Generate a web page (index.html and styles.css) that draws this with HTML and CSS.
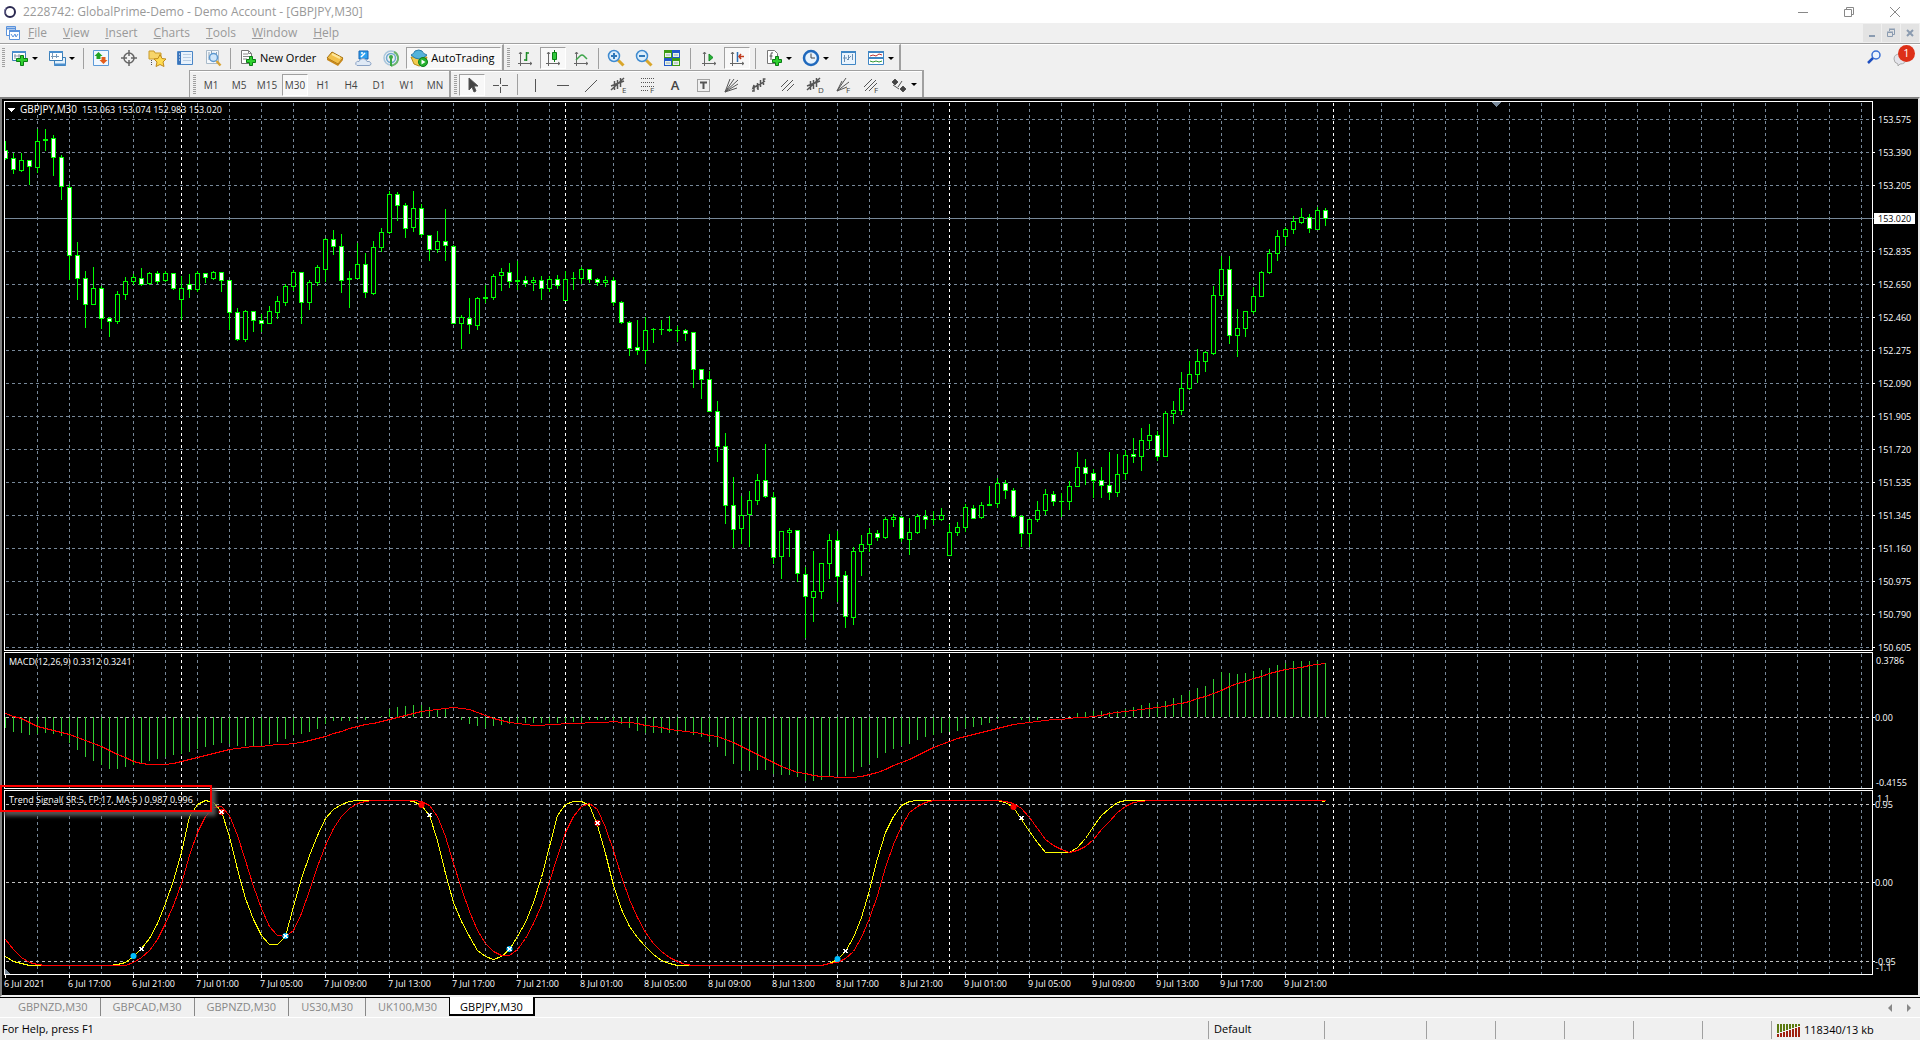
FILE: index.html
```html
<!DOCTYPE html>
<html lang="en">
<head>
<meta charset="utf-8">
<title>2228742: GlobalPrime-Demo - Demo Account - [GBPJPY,M30]</title>
<link rel="stylesheet" href="styles.css">
</head>
<body>
<header class="titlebar">
  <svg class="logo" width="14" height="14" viewBox="0 0 14 14"><ellipse cx="7" cy="7" rx="5" ry="5" fill="none" stroke="#2a2850" stroke-width="2"/><path d="M3 2.500Q1 5 2 9" stroke="#8a88b0" fill="none"/></svg>
  <h1>2228742: GlobalPrime-Demo - Demo Account - [GBPJPY,M30]</h1>
  <div class="winbtns">
    <button aria-label="Minimize"><svg width="12" height="12"><path d="M1 6.500h10" stroke="#888"/></svg></button>
    <button aria-label="Restore"><svg width="12" height="12" fill="none" stroke="#888"><path d="M1.500 3.500h7v7h-7zM3.500 3.500v-2h7v7h-2"/></svg></button>
    <button aria-label="Close"><svg width="12" height="12"><path d="M1 1l10 10M11 1L1 11" stroke="#888"/></svg></button>
  </div>
</header>

<nav class="menubar">
  <svg class="docicon" width="16" height="14" viewBox="0 0 16 14" fill="#fff" stroke="#5b93dc"><path d="M1.500.500h9v9h-9z"/><path d="M1.500 2.500h9" stroke-width="2"/><path d="M4.500 4.500h10v9h-10z"/><path d="M4 5h11" stroke-width="2"/><path d="M6 8l2 3 2-3 1 3 2-3" fill="none"/></svg>
  <button><u>F</u>ile</button><button><u>V</u>iew</button><button><u>I</u>nsert</button><button><u>C</u>harts</button><button><u>T</u>ools</button><button><u>W</u>indow</button><button><u>H</u>elp</button>
  <div class="docbtns">
    <button aria-label="Minimize chart"><svg width="10" height="10"><path d="M2 8h6" stroke="#8a9bb0" stroke-width="2"/></svg></button>
    <button aria-label="Restore chart"><svg width="10" height="10" fill="none" stroke="#8a9bb0"><path d="M1.500 4.500h5v4h-5zM1 4h6M3.500 3V1.500h5v5H7M3 1h6"/></svg></button>
    <button aria-label="Close chart"><svg width="10" height="10"><path d="M2 2l6 6M8 2L2 8" stroke="#8a9bb0" stroke-width="2"/></svg></button>
  </div>
</nav>

<div class="toolbars">
<div class="row">
  <div class="bar">
    <span class="grip"></span>
    <button class="drop" aria-label="New chart"><svg viewBox="0 0 18 18"><path d="M1.500 2.500h13v9h-13z" fill="#fff" stroke="#3c7fb8"/><path d="M1 3h14" stroke="#4a8fce" stroke-width="2"/><path d="M4 5v5M8 5v4M3 7h6" stroke="#89a" fill="none"/><path d="M9.500 6.500h3v3h4v3h-4v4h-3v-4h-4v-3h4z" fill="#2fd02f" stroke="#0a7d14"/></svg><i></i></button>
    <button class="drop" aria-label="Profiles"><svg viewBox="0 0 18 18"><path d="M6.500 8.500h11v8h-11z" fill="#e4f1fc" stroke="#3c7fb8"/><path d="M6 15.500h12" stroke="#4a8fce" stroke-width="2"/><path d="M1.500 2.500h13v9h-13z" fill="#fff" stroke="#3c7fb8"/><path d="M1 3h14" stroke="#4a8fce" stroke-width="2"/><path d="M4.500 4v6M8.500 5v4M3 7.500h8" stroke="#7a99b8" fill="none"/></svg><i></i></button>
    <span class="sep"></span>
    <button aria-label="Market Watch"><svg viewBox="0 0 18 18"><path d="M1.500 1.500h15v15h-15z" fill="#f2f8ff" stroke="#5c9ad8"/><path d="M6.500 3l4 4h-2v3h-4V7h-2z" fill="#22a322"/><path d="M11.500 15l4-4h-2V8h-4v3h-2z" fill="#e35d1c"/></svg></button>
    <button aria-label="Data Window"><svg viewBox="0 0 18 18" fill="none" stroke="#666" stroke-width="1.500"><circle cx="9" cy="9" r="5"/><path d="M9 1v6M9 11v6M1 9h6M11 9h6"/></svg></button>
    <button aria-label="Navigator"><svg viewBox="0 0 18 18"><path d="M1 2h5l1 2h6v6H1z" fill="#f7d56a" stroke="#c99b2a"/><path d="M3.500 11v6" stroke="#555" stroke-dasharray="1 1"/><path d="M12 5.500l2 4 4 .500-3 3 1 4.500-4-2-4 2 1-4.500-3-3 4-.500z" fill="#ffdc50" stroke="#c08a1c"/></svg></button>
    <button aria-label="Terminal"><svg viewBox="0 0 18 18"><path d="M1.500 2.500h15v13h-15z" fill="#e8f2fc" stroke="#4a86c6"/><path d="M2 3h3v12H2z" fill="#3973ba"/><path d="M3 5h1M3 8h1M3 11h1" stroke="#fff"/><path d="M7 5.500h8M7 8.500h8M7 11.500h8" stroke="#b9cde2"/></svg></button>
    <button aria-label="Strategy Tester"><svg viewBox="0 0 18 18"><path d="M2.500 1.500h12v13h-12z" fill="#f4f8fc" stroke="#a9bac9"/><path d="M5 3v8M7.500 2v6M12.500 3v4" stroke="#8fa3b5"/><circle cx="9.500" cy="8.500" r="4" fill="#cfe6fa" stroke="#5d99d0" stroke-width="1.500"/><path d="M12.500 12l4 4.500" stroke="#d8a436" stroke-width="2.500"/></svg></button>
    <span class="sep"></span>
    <button class="text"><svg viewBox="0 0 18 18"><path d="M2.500 1.500h7l3 3v10h-10z" fill="#fff" stroke="#777"/><path d="M4 5h5M4 7.500h7M4 10h4M9.500 1.500v3h3" stroke="#888" fill="none"/><path d="M10.500 7.500h3v3h3v3h-3v3h-3v-3h-3v-3h3z" fill="#2fd02f" stroke="#0a7d14"/></svg>New Order</button>
    <button aria-label="MetaEditor"><svg viewBox="0 0 18 18"><path d="M6 3l11 6-5 6L1 9z" fill="#f2c04a" stroke="#a36f10"/><path d="M1 9l11 6 5-6v2l-5 6L1 11z" fill="#c8881a"/><path d="M6 5l8 4" stroke="#ffe79a" stroke-width="2"/></svg></button>
    <button aria-label="MQL5 community"><svg viewBox="0 0 18 18"><path d="M5 2h9v8H5z" fill="#2ea0ee" stroke="#1565b5"/><path d="M7 8l4-4M7 4h2" stroke="#fff" stroke-width="1.500"/><path d="M3 16.500q-2-1-1-3 1-2 3-1 1-3 4-3 3 0 4 3 3-1 4 2 0 2-2 2z" fill="#dfe9f5" stroke="#8aa2c4"/></svg></button>
    <button aria-label="Signals"><svg viewBox="0 0 18 18" fill="none"><circle cx="9" cy="9" r="7" stroke="#a9c6dc" stroke-width="1.500"/><circle cx="9" cy="9" r="4.500" stroke="#6fa9d2" stroke-width="1.500"/><path d="M9 17q8-2 7-9-1-4-4-5" stroke="#69b56c" stroke-width="2"/><circle cx="9" cy="8" r="2" fill="#39a845"/><path d="M9 9v8" stroke="#39a845" stroke-width="2"/></svg></button>
    <button class="text on"><svg viewBox="0 0 18 18"><path d="M1 8h16l-2 7-6 2-5-2z" fill="#f3cb4e" stroke="#b58a1b"/><path d="M1 6q3-1 4-4 4-2 7 0 1 3 5 4-4 4-8 4T1 6z" fill="#54b3da" stroke="#2a7ca8"/><circle cx="13" cy="13" r="4.500" fill="#25b12e" stroke="#0d7c1a"/><path d="M11.500 10.500l4 2.500-4 2.500z" fill="#fff"/></svg>AutoTrading</button>
  </div>
  <div class="bar">
    <span class="grip"></span>
    <button aria-label="Bar chart"><svg viewBox="0 0 18 18" class="axis"><path d="M4.500 3v14M2 14.500h14M3 5l1.500-2L6 5M14 13l2 1.500-2 1.500"/><path d="M10.500 3v9M10 4h3M8 11h3" stroke="#1c8a26" stroke-width="1.500"/></svg></button>
    <button class="on" aria-label="Candlesticks"><svg viewBox="0 0 18 18" class="axis"><path d="M4.500 3v14M2 14.500h14M3 5l1.500-2L6 5M14 13l2 1.500-2 1.500"/><path d="M10.500 1v12" stroke="#0a7d14"/><path d="M8.500 3.500h4v7h-4z" fill="#2fc83b" stroke="#0a7d14"/></svg></button>
    <button aria-label="Line chart"><svg viewBox="0 0 18 18" class="axis"><path d="M4.500 3v14M2 14.500h14M3 5l1.500-2L6 5M14 13l2 1.500-2 1.500"/><path d="M4 11l4-4q2-2 4 0l3 3" stroke="#3da54a" stroke-width="1.500"/></svg></button>
    <span class="sep"></span>
    <button aria-label="Zoom in"><svg viewBox="0 0 18 18"><path d="M11 11l5.500 5.500" stroke="#d9a62b" stroke-width="3"/><circle cx="7" cy="7" r="5.500" fill="#dceefb" stroke="#3f8bd0" stroke-width="1.500"/><path d="M4 7h6M7 4v6" stroke="#2f78b8" stroke-width="2"/></svg></button>
    <button aria-label="Zoom out"><svg viewBox="0 0 18 18"><path d="M11 11l5.500 5.500" stroke="#d9a62b" stroke-width="3"/><circle cx="7" cy="7" r="5.500" fill="#dceefb" stroke="#3f8bd0" stroke-width="1.500"/><path d="M4 7h6" stroke="#2f78b8" stroke-width="2"/></svg></button>
    <button aria-label="Tile windows"><svg viewBox="0 0 18 18"><path d="M1 1h8v8H1zM9 9h8v8H9z" fill="#3c9b16"/><path d="M9 1h8v8H9zM1 9h8v8H1z" fill="#2258c9"/><path d="M2 4h6v4H2zM10 4h6v4h-6zM2 12h6v4H2zM10 12h6v4h-6z" fill="#e9f3e4"/><path d="M3 6h4M11 6h4M3 14h4M11 14h4" stroke="#9ab"/></svg></button>
    <span class="sep wide"></span>
    <button aria-label="Auto scroll"><svg viewBox="0 0 18 18" class="axis"><path d="M4.500 3v14M2 14.500h14M3 5l1.500-2L6 5M14 13l2 1.500-2 1.500"/><path d="M9 5l4 3.500L9 12z" fill="#26b436" stroke="#168a24"/></svg></button>
    <button class="on" aria-label="Chart shift"><svg viewBox="0 0 18 18" class="axis"><path d="M4.500 3v14M2 14.500h14M3 5l1.500-2L6 5M14 13l2 1.500-2 1.500"/><path d="M9.500 3v10" stroke="#2b6fb5" stroke-width="1.500"/><path d="M11 7.500h5M13 5l-2 2.500 2 2.500" stroke="#c0391b" stroke-width="1.500"/></svg></button>
    <span class="sep wide"></span>
    <button class="drop" aria-label="Indicators"><svg viewBox="0 0 18 18"><path d="M2.500 1.500h7l3 3v10h-10z" fill="#fff" stroke="#777"/><path d="M8 4q-2-1-2 1v6M4.500 7h3" stroke="#555" fill="none"/><path d="M10.500 7.500h3v3h3v3h-3v3h-3v-3h-3v-3h3z" fill="#2fd02f" stroke="#0a7d14"/></svg><i></i></button>
    <button class="drop" aria-label="Periods"><svg viewBox="0 0 18 18"><circle cx="9" cy="9" r="7" fill="#e8f3fd" stroke="#1f69bd" stroke-width="2.500"/><path d="M9 4.500V9h4" stroke="#444" fill="none"/></svg><i></i></button>
    <button aria-label="Templates"><svg viewBox="0 0 18 18"><path d="M2.500 2.500h14v13h-14z" fill="#eaf4fd" stroke="#3f86c5"/><path d="M2 3h15" stroke="#3f86c5" stroke-width="2"/><path d="M5.500 6v7M9.500 6v5M13.500 5v6M4 9h4M8 11l4-4" stroke="#6b8fb3" fill="none"/></svg></button>
    <button class="drop" aria-label="Chart templates"><svg viewBox="0 0 18 18"><path d="M1.500 2.500h15v13h-15z" fill="#fff" stroke="#3f86c5"/><path d="M1 3h16M2 9h14" stroke="#3f86c5" stroke-width="2"/><path d="M3 7l3-1 3 1 3-2 3 1" stroke="#b33" fill="none"/><path d="M3 12l3 1 3-1 3 1 3-1" stroke="#393" fill="none"/></svg><i></i></button>
  </div>
  <div class="alerts">
    <button aria-label="Search"><svg width="14" height="14" viewBox="0 0 14 14" fill="none"><circle cx="9" cy="5" r="4" fill="#eef4fd" stroke="#3a6fd4" stroke-width="1.500"/><path d="M6 8l-5 5" stroke="#1f4fc0" stroke-width="2.500"/></svg></button>
    <button aria-label="Messages"><svg width="22" height="22" viewBox="0 0 22 22"><path d="M1 13q0-5 6-5t6 5-6 5l-2 2v-2q-4-1-4-5z" fill="#e4e4ea" stroke="#aaa"/></svg><b class="badge">1</b></button>
  </div>
</div>
<div class="row second">
  <div class="bar">
    <span class="grip"></span>
    <button>M1</button><button>M5</button><button>M15</button><button class="on">M30</button><button>H1</button><button>H4</button><button>D1</button><button>W1</button><button>MN</button>
  </div>
  <div class="bar draw">
    <span class="grip"></span>
    <button class="on" aria-label="Cursor"><svg viewBox="0 0 18 18"><path d="M6 2v12l3-3 2 5 2-1-2-5h4z" fill="#444"/></svg></button>
    <button aria-label="Crosshair"><svg viewBox="0 0 18 18"><path d="M9.500 2v6M9.500 11v6M2 9.500h6M11 9.500h6"/></svg></button>
    <span class="sep"></span>
    <button aria-label="Vertical line"><svg viewBox="0 0 18 18"><path d="M9.500 3v13"/></svg></button>
    <button aria-label="Horizontal line"><svg viewBox="0 0 18 18"><path d="M3 9.500h12"/></svg></button>
    <button aria-label="Trendline"><svg viewBox="0 0 18 18"><path d="M3 16L15 4"/></svg></button>
    <button aria-label="Equidistant channel"><svg viewBox="0 0 18 18"><path d="M1 14L14 2M1 10l13-5M4.500 5v9M7.500 4v9M10.500 2v9" stroke-width="1.500"/><text x="12" y="17">E</text></svg></button>
    <button aria-label="Fibonacci retracement"><svg viewBox="0 0 18 18"><path d="M3 2.500h13M3 6.500h13M3 10.500h13M3 14.500h8" stroke-dasharray="1 1"/><text x="12" y="17">F</text></svg></button>
    <button class="letter">A</button>
    <button aria-label="Text label"><svg viewBox="0 0 18 18"><path d="M3.500 3.500h12v12h-12z" stroke-dasharray="1 1"/><path d="M6 6.500h7M9.500 6v7" stroke-width="2"/></svg></button>
    <button aria-label="Gann fan"><svg viewBox="0 0 18 18"><path d="M3 16L8 3M3 16L12 3M3 16L16 4M3 16l13-8M3 16l12-4"/></svg></button>
    <button aria-label="Elliott wave"><svg viewBox="0 0 18 18"><path d="M2 15h2V9l-1 3 5-3v5M7.500 13V7M10.500 11V4M9 9l6-4M13.500 9V3h2" stroke-width="1.500"/></svg></button>
    <button aria-label="Parallel lines"><svg viewBox="0 0 18 18"><path d="M3 11l7-7M4 15L15 4M9 15l7-7"/></svg></button>
    <button aria-label="Regression channel"><svg viewBox="0 0 18 18"><path d="M1 14L14 2M1 10l13-5M4.500 5v9M7.500 4v9M10.500 2v9" stroke-width="1.500"/><text x="12" y="17">D</text></svg></button>
    <button aria-label="Fibonacci fan"><svg viewBox="0 0 18 18"><path d="M3 15L12 2M3 15L15 6M3 15l10-4M3 15l5-10"/><text x="12" y="17">F</text></svg></button>
    <button aria-label="Fibonacci channel"><svg viewBox="0 0 18 18"><path d="M2 11l8-8M3 15L14 4M7 15l8-8"/><text x="12" y="17">F</text></svg></button>
    <button class="drop" aria-label="Arrows"><svg viewBox="0 0 18 18"><path d="M5 3l3 3-3 3-3-3zM13 10l3 3-3 3-3-3z" fill="#444"/><path d="M3 9l6 4M12 5l-4 6"/></svg><i></i></button>
  </div>
</div>
</div>

<main class="workspace">
  <svg id="chart" class="chart" role="img" aria-label="GBPJPY M30 chart"></svg>
  <div class="highlight"></div>
</main>

<nav class="tabs">
  <a href="#">GBPNZD,M30</a><a href="#">GBPCAD,M30</a><a href="#">GBPNZD,M30</a><a href="#">US30,M30</a><a href="#">UK100,M30</a><a href="#" class="active">GBPJPY,M30</a>
  <div class="scroll"><button aria-label="Scroll left"><svg width="6" height="8"><path d="M5 0v8L1 4z" fill="#888"/></svg></button><button aria-label="Scroll right"><svg width="6" height="8"><path d="M1 0v8l4-4z" fill="#888"/></svg></button></div>
</nav>

<footer class="status">
  <span class="help">For Help, press F1</span>
  <span class="cell profile">Default</span><span class="cell wide"></span><span class="cell"></span><span class="cell"></span><span class="cell"></span><span class="cell"></span><span class="cell"></span>
  <span class="cell net"><svg width="23" height="13" viewBox="0 0 23 13"><path d="M1 0v9M4 0v8M7 0v7M10 0v6M13 0v5M16 0v4M19 0v3M22 0v2" stroke="#5b7a10" stroke-width="2"/><path d="M1 10v3M4 9v4M7 8v5M10 7v6M13 6v7M16 5v8M19 4v9M22 3v10" stroke="#a02010" stroke-width="2"/></svg>118340/13 kb</span>
</footer>
<script src="chart.js"></script>
</body>
</html>
```
FILE: styles.css
```css
* { box-sizing: border-box; }
body {
  margin: 0;
  height: 100vh;
  display: flex;
  flex-direction: column;
  overflow: hidden;
  background: #f0f0f0;
  color: #000;
  font: 11px/16px "Open Sans", "Noto Sans", sans-serif;
}
button {
  margin: 0;
  padding: 0;
  border: 0;
  background: none;
  color: inherit;
  font: inherit;
  white-space: nowrap;
}
button svg { display: block; overflow: visible; }

.titlebar { display: flex; align-items: center; height: 23px; background: #fff; padding-left: 3px; }
.titlebar h1 { flex: 1; margin: 0 0 0 6px; font-size: 12px; font-weight: 400; color: #999; }
.winbtns { display: flex; padding-right: 2px; }
.winbtns button { width: 46px; height: 20px; display: grid; place-items: center; }

.menubar { display: flex; align-items: center; height: 20px; padding-left: 5px; color: #999; font-size: 12px; }
.menubar > button { padding: 0 8px; }
.docicon { margin-right: -1px; }
.docbtns { margin-left: auto; display: flex; gap: 1px; padding-right: 1px; }
.docbtns button { width: 18px; height: 18px; background: #e3e3e3; display: grid; place-items: center; }

.row { display: flex; height: 27px; border-top: 1px solid #a0a0a0; box-shadow: inset 0 1px #fff; }
.row.second { border-top: 0; box-shadow: none; }
.bar { display: flex; align-items: center; padding: 1px 0 0 3px; border-right: 2px solid #a0a0a0; border-top: 1px solid transparent; }
.bar:first-child { padding-left: 2px; }
.row.second .bar { border-top: 1px solid #a0a0a0; box-shadow: inset 0 1px #fff; }
.row.second .bar:first-child { margin-left: 189px; padding-left: 3px; border-left: 1px solid #a0a0a0; }
.grip { width: 3px; height: 20px; margin-right: 1px; background: repeating-linear-gradient(#a0a0a0 0 1px, transparent 1px 2px); }
.sep { width: 1px; height: 21px; margin: 0 3px; background: #a0a0a0; }
.sep.wide { margin: 0 4px; }
.bar button { width: 28px; height: 22px; display: flex; align-items: center; justify-content: center; }
.bar button svg { width: 18px; height: 18px; flex: none; }
.bar button.drop { width: 37px; gap: 3px; }
.bar button.drop i { border: 3px solid transparent; border-top-color: #000; border-bottom: 0; }
.bar button.text { width: auto; padding: 0 5px; gap: 3px; }
.bar button.on { width: 26px; margin: 0 1px; background: #f8f8f8; border: 1px solid; border-color: #a0a0a0 #fff #fff #a0a0a0; }
.bar button.text.on { width: auto; padding: 0 6px 0 3px; }
.axis { fill: none; stroke: #666; }
.row.second .bar button { color: #444; font-size: 10px; }
.draw svg { fill: none; stroke: #555; }
.draw text { fill: #444; stroke: none; font-size: 8px; }
.row.second .bar button.letter { font-size: 13px; font-weight: 600; }
.alerts { margin-left: auto; display: flex; align-items: center; padding-right: 5px; }
.alerts button { position: relative; margin-left: 12px; }
.badge {
  position: absolute;
  top: -1px;
  right: 0;
  width: 17px;
  height: 17px;
  border-radius: 9px;
  background: #dd3018;
  color: #fff;
  font-weight: 400;
  text-align: center;
}

.workspace {
  position: relative;
  flex: 1;
  min-height: 200px;
  background: #000;
  border: 2px solid;
  border-color: #808080 #e8e8e8 #f0f0f0 #808080;
}
.chart { display: block; width: 100%; height: 100%; position: absolute; shape-rendering: crispEdges; }
.chart text { fill: #fff; font-size: 9px; white-space: pre; }
.chart text.now { fill: #000; }
.chart text.symbol { font-size: 10px; }
.highlight {
  position: absolute;
  left: -2px;
  top: 77%;
  margin-top: -4px;
  width: 212px;
  height: 27px;
  border: 2px solid #f00;
  box-shadow: 4px 4px 4px #555;
}

.tabs { display: flex; height: 21px; border-top: 1px solid #000; border-bottom: 1px solid #fff; padding: 0 8px 0 6px; }
.tabs a { height: 18px; padding: 1px 12px; color: #888; text-decoration: none; }
.tabs a + a { border-left: 1px solid #888; }
.tabs a.active { height: 19px; margin-top: -1px; padding: 2px 10px; background: #fff; color: #000; border: 1px solid #000; border-width: 0 2px 2px 1px; }
.scroll { margin-left: auto; display: flex; gap: 13px; align-items: center; }

.status { display: flex; height: 22px; padding: 3px 0 1px 2px; }
.help { flex: 1; }
.cell { width: 69px; border-left: 1px solid #a0a0a0; padding-left: 5px; }
.cell.wide { width: 102px; }
.cell.profile { width: 116px; }
.cell.net { width: 149px; display: flex; align-items: center; gap: 4px; }
```
FILE: chart.js
```js
// Prices are stored in thirds of a pixel below a block's base line.
// Each bar: high, body top, body bottom, low, falling (1) or rising (0).
const BLOCKS = [
  { base: 0, bars: [
    [123,151,178,180,1],[158,174,210,222,1],[158,180,213,216,0],[180,180,201,255,1],[87,123,204,219,0],[87,117,123,153,0],
    [105,114,174,228,1],[165,171,261,300,1],[252,261,468,540,1],[426,465,537,600,1],[513,534,615,684,1],[501,564,615,615,0],
    [558,564,657,687,1],[651,654,666,711,1],[573,582,666,672,0],[531,543,585,600,0],[522,531,546,555,0],[504,534,555,558,1],
    [516,519,552,555,0],[513,519,546,552,1],[513,519,543,546,0],[519,519,567,570,1],[528,564,600,660,0],[522,552,570,594,1],
    [513,519,570,576,0],[519,519,534,549,1],[513,516,537,540,0],[516,516,543,576,1],[540,540,639,690,1],[624,636,720,723,1],
    [630,633,720,726,0],[633,633,663,696,1],[642,660,672,696,1],[618,633,672,672,0],[588,603,639,657,0],[552,558,609,618,0],
    [510,516,561,573,0],[516,516,609,672,1],[540,546,609,630,0],[495,501,549,558,0],[414,417,510,546,0],[390,417,441,465,1],
    [402,438,543,579,1],[513,534,540,624,0],[429,492,537,537,0],[459,492,579,594,1],[423,441,582,585,0],[384,396,444,456,0],
    [273,282,399,402,0],[276,282,318,363,1],[309,315,387,414,1],[273,324,384,396,0],[312,324,405,411,1],[405,405,450,483,1],
    [393,423,450,459,0],[327,423,438,483,1],[435,438,672,672,1],[645,651,672,747,0],[594,654,675,702,1],[591,594,678,690,0]] },
  { base: 210, bars: [
    [345,381,387,399,0],[312,318,384,390,0],[294,306,318,363,0],[279,306,336,354,1],[273,330,336,360,0],[318,330,342,351,1],
    [321,330,339,363,0],[318,330,357,390,1],[318,327,357,366,0],[315,327,348,357,1],[303,327,393,393,0],[306,324,327,360,0],
    [291,297,327,342,0],[297,297,330,339,1],[324,327,339,348,1],[318,330,339,351,0],[321,330,399,408,1],[393,396,459,462,1],
    [453,456,537,558,1],[450,531,543,555,1],[441,480,543,582,0],[474,477,480,519,0],[450,477,480,495,0],[438,477,483,486,0],
    [468,480,483,516,0],[477,480,492,513,1],[486,486,600,654,1],[597,597,630,687,1],[603,627,726,726,1]] },
  { base: 840, bars: [
    [63,93,201,246,1],[159,198,378,432,1],[291,375,450,504,1],[348,405,447,492,0],[333,360,405,501,0],[282,300,363,375,0],
    [192,300,351,354,1],[336,351,534,552,1],[453,453,531,597,0],[444,450,459,531,0],[450,450,582,606,1],[561,582,651,774,1],
    [513,633,654,726,0],[549,549,636,657,0],[462,480,552,597,0],[453,480,591,666,1],[573,585,711,744,1],[501,513,714,735,0],
    [465,492,516,588,0],[444,459,495,516,0],[450,459,474,483,1],[411,417,474,477,0],[402,411,420,441,0],[408,411,477,486,1],
    [414,456,480,525,0],[402,408,459,462,0],[390,408,420,447,1],[393,417,420,435,0],[384,405,420,423,0],[432,456,528,528,0],
    [426,441,459,468,0],[372,381,444,456,0],[375,384,417,417,1],[366,375,414,417,0],[318,372,378,378,0],[294,309,372,384,0],
    [300,309,333,357,1],[324,330,411,414,1],[405,408,462,501,1],[417,417,462,501,0],[363,390,420,426,0],[327,342,393,405,0],
    [333,342,366,378,1],[339,363,366,411,0],[303,318,366,390,0],[216,261,321,321,0]] },
  { base: 270, bars: [
    [807,831,852,885,1],[837,849,873,924,1],[831,870,888,924,1],[786,885,909,930,1],[792,852,909,921,0],[780,795,852,870,0],
    [744,792,801,819,1],[714,750,801,843,0],[702,735,753,777,0],[723,735,801,813,1],[663,669,801,801,0],[633,660,672,702,0],
    [546,594,663,675,0],[513,552,597,600,0],[477,513,555,579,0],[483,486,516,546,0],[288,315,492,495,0],[198,237,318,330,0],
    [198,237,438,462,1],[357,414,438,501,0],[363,363,417,441,0],[291,318,366,372,0],[243,246,321,321,0],[177,189,249,252,0],
    [120,138,192,213,0],[111,117,141,168,0],[78,93,120,132,0],[54,81,99,102,0],[72,81,117,129,1],[51,60,120,120,0],[54,60,87,108,1]] }
];

// Indicator series, in thirds of a pixel; one value per bar.
const HIST = [263,275,279,284,281,280,281,287,308,329,350,362,374,386,386,380,374,368,362,356,350,344,341,335,328,320,314,309,311,317,318,319,317,311,305,296,285,281,275,266,251,243,243,243,236,240,232,229,207,201,198,195,196,201,206,207,231,240,251,257,263,257,254,251,251,250,248,248,248,248,245,246,245,240,240,240,239,251,263,272,278,278,278,278,278,274,284,290,305,320,347,371,389,392,389,389,403,404,404,410,422,422,419,410,405,407,396,380,371,353,338,326,317,311,299,290,284,278,275,272,263,260,254,248,236,232,234,239,244,239,232,232,232,228,219,216,213,213,216,212,207,200,195,189,191,183,174,165,154,144,138,117,96,99,101,99,94,90,84,75,69,63,63,63,63,69];
const MACD = [220,228,236,246,259,266,272,277,284,292,302,311,319,330,342,352,363,370,373,373,373,370,365,358,352,346,340,334,328,325,322,320,319,317,314,313,310,306,301,295,289,281,273,266,259,254,249,244,237,232,226,219,213,210,207,204,202,204,209,217,226,235,241,246,250,253,256,256,254,252,251,250,249,247,247,246,244,246,248,251,255,258,263,267,271,275,278,281,285,290,299,308,319,332,343,355,366,378,388,396,401,407,408,409,411,411,411,409,403,398,388,376,367,357,345,334,322,312,304,296,289,283,276,270,265,259,254,250,247,244,241,239,238,235,233,232,229,225,220,216,214,211,208,205,201,198,194,190,184,176,169,161,151,140,131,124,116,109,101,93,88,85,82,77,73,70];
const rep = (v, n) => Array(n).fill(v);
const FAST = [948,965,971,975,975,...rep(976,8),975,972,966,948,925,895,850,790,720,637,530,492,480,488,515,590,688,775,838,885,913,913,888,800,715,645,585,535,508,492,485,482,...rep(481,6),484,495,527,600,700,788,843,890,930,948,958,948,927,888,846,787,712,620,525,492,485,485,495,555,640,735,807,860,892,920,944,960,970,...rep(976,18),975,970,957,933,893,833,750,655,578,528,497,485,...rep(481,11),487,502,537,573,608,637,637,637,637,622,595,558,527,505,488,...rep(481,25),484];
const SLOW = [898,928,953,967,972,...rep(976,10),975,966,952,932,898,850,795,730,645,578,528,502,500,525,585,660,740,805,858,887,890,870,820,750,680,615,565,530,504,489,483,...rep(481,6),484,495,530,590,670,745,815,870,910,935,946,945,927,895,850,795,725,650,578,528,500,491,508,562,630,710,778,833,877,910,935,953,965,972,...rep(976,17),971,966,955,933,893,835,765,683,613,560,518,500,486,...rep(481,9),483,490,505,532,565,597,615,628,637,632,618,597,568,543,518,500,488,483,...rep(481,23)];
// bar, height, dot colour, cross
const MARKS = [[16,948,'#00bfff',0],[17,927,'',1],[27,516,'red',1],[35,888,'#00bfff',1],[52,495,'red',0],[53,524,'',1],[63,927,'#00bfff',1],[74,549,'red',1],[104,957,'#00bfff',0],[105,933,'',1],[126,500,'red',0],[127,533,'',1]];
const PRICES = ['153.575','153.390','153.205','','152.835','152.650','152.460','152.275','152.090','151.905','151.720','151.535','151.345','151.160','150.975','150.790','150.605'];
const TIMES = ['6 Jul 2021','6 Jul 17:00','6 Jul 21:00'];
for (const d of [7, 8, 9]) for (const h of ['01','05','09','13','17','21']) TIMES.push(`${d} Jul ${h}:00`);

const chart = document.getElementById('chart');
const HEIGHT = 896, GRID = '#778899', LEVEL = '#c0c0c0';

function draw() {
  const W = chart.clientWidth, k = chart.clientHeight / HEIGHT;
  const Y = y => Math.round(y * k);
  const R = W - 46;
  const X = i => 3 + 8 * i;
  const out = [];
  const rect = (x, y, w, h, fill) => out.push(`<rect x="${x}" y="${y}" width="${w}" height="${h}" fill="${fill}"/>`);
  const dash = (d, stroke) => out.push(`<path d="${d}" stroke="${stroke}" stroke-dasharray="3 3" fill="none"/>`);
  const text = (x, y, s, cls = '') => out.push(`<text class="${cls}" x="${x}" y="${Y(y) + 4}">${s}</text>`);
  const panes = [[2, 551], [553, 689], [691, 875]];

  for (const [a, b] of panes) {
    for (let x = 35; x < R; x += 32) dash(`M${x}.5 ${Y(a) + 2}V${Y(b)}`, GRID);
    for (const i of [22, 70, 118, 166]) dash(`M${X(i)}.5 ${Y(a) + 2}V${Y(b)}`, '#fff');
  }
  PRICES.forEach((p, n) => {
    const y = 20 + 33 * n;
    if (!p) return;
    dash(`M4 ${Y(y)}.5H${R}`, GRID);
    rect(R + 1, Y(y), 2, 1, '#fff');
    text(R + 6, y, p);
  });
  rect(3, Y(119), R, 1, GRID);
  for (const y of [618, 705, 783, 862]) { dash(`M4 ${Y(y)}.5H${R}`, LEVEL); rect(R + 1, Y(y), 2, 1, '#fff'); }

  let i = 0;
  for (const { base, bars } of BLOCKS) for (const [h, t, b, l, down] of bars) {
    const y = z => Y(Math.round((z + base) / 3) + 1);
    const x = X(i++);
    rect(x, y(h), 1, y(l) - y(h), '#0f0');
    const left = Math.max(x - 2, 2);
    rect(left, y(t), x + 3 - left, Math.max(1, y(b) - y(t)), '#0f0');
    if (b - t > 6) rect(x - 1, y(t) + 1, 3, y(b) - y(t) - 2, down ? '#fff' : '#000');
  }

  const sub = z => 541 + z / 3;
  HIST.forEach((v, n) => {
    const a = Y(Math.min(sub(v), 618)), b = Y(Math.max(sub(v), 618));
    if (b > a) rect(X(n), a, 1, b - a, '#32cd32');
  });
  const line = (data, stroke) => out.push(`<polyline fill="none" stroke="${stroke}" points="${data.map((v, n) => `${X(n)}.5,${Y(Math.floor(sub(v)))}.5`).join(' ')}"/>`);
  line(MACD, 'red');
  line(FAST, 'yellow');
  line(SLOW, 'red');
  for (const [n, z, dot, cross] of MARKS) {
    const x = X(n) + 0.5, y = Y(sub(z));
    if (dot) out.push(`<circle cx="${x}" cy="${y}" r="3" fill="${dot}" shape-rendering="auto"/>`);
    if (cross) out.push(`<path d="M${x - 2} ${y - 2}l4 4m0-4l-4 4" stroke="#fff"/>`);
  }

  for (const [a, b] of panes) out.push(`<path d="M2.5 ${Y(a)}.5H${R}.5V${Y(b)}.5H2.5z" fill="none" stroke="#fff"/>`);
  out.push(`<path d="M6 9h7l-3.500 4z" fill="#fff"/><path d="M1490 3h9l-4.500 5z" fill="${GRID}"/><path d="M3 ${Y(869)}l5 6h-5z" fill="${GRID}"/>`);
  text(18, 10, 'GBPJPY,M30', 'symbol'); text(80, 10, '153.063 153.074 152.983 153.020');
  text(7, 562, 'MACD(12,26,9) 0.3312 0.3241');
  text(7, 700, 'Trend Signal( SR:5, FP:17, MA:5 ) 0.987 0.996');
  rect(R + 2, Y(119) - 5, 41, 11, '#fff');
  text(R + 6, 119, '153.020', 'now');
  for (const [x, y, s] of [[4,561,'0.3786'],[3,618,'0.00'],[4,683,'-0.4155'],[5,699,'1.1'],[3,705,'0.95'],[3,783,'0.00'],[3,862,'-0.95'],[4,868,'-1.1']]) text(R + x, y, s);
  TIMES.forEach((s, n) => { rect(3 + 64 * n, Y(876), 1, 3, '#fff'); text(2 + 64 * n, 884, s); });
  chart.innerHTML = out.join('');
}
draw();
addEventListener('resize', draw);
```
